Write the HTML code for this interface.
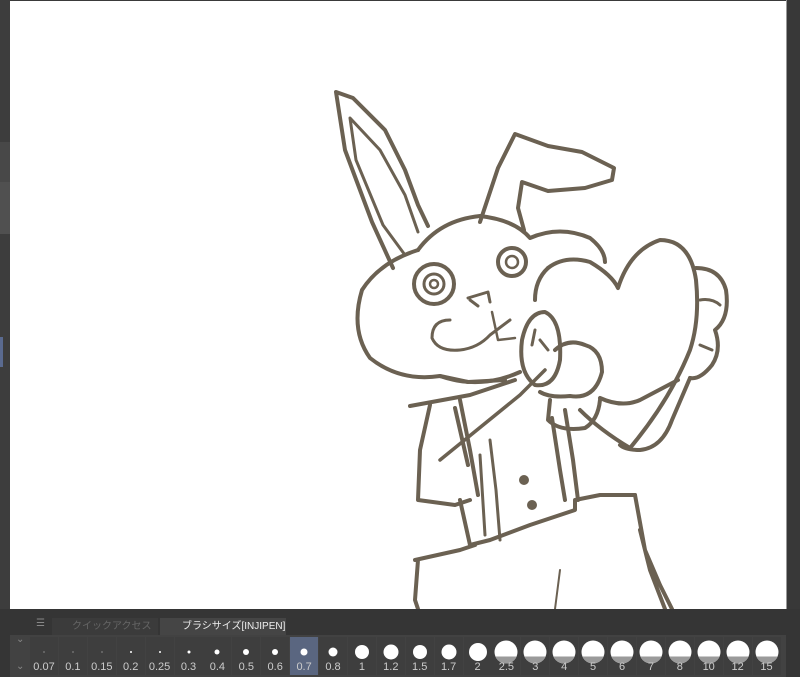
<!DOCTYPE html>
<html><head><meta charset="utf-8"><style>
html,body{margin:0;padding:0;width:800px;height:677px;overflow:hidden;background:#3a3a3a;font-family:"Liberation Sans","Noto Sans CJK JP",sans-serif}
#left{position:absolute;left:0;top:0;width:10px;height:609px;background:#3d3d3d}
#canvas{position:absolute;left:10px;top:1px;width:776px;height:608px;background:#fff}
#right{position:absolute;left:786px;top:0;width:14px;height:609px;background:#383838;border-left:1px solid #999}
#panel{position:absolute;left:0;top:609px;width:800px;height:68px;background:#353535}
.tab{position:absolute;top:9px;height:17px;font-size:10px;line-height:17px;color:#ddd;padding-left:20px}
.cell{position:absolute;top:28px;width:28px;height:38px;background:#3e3e3e}
.cell span{position:absolute;bottom:2px;left:0;width:100%;text-align:center;font-size:11px;color:#ccc}
.cell i{position:absolute;left:50%;border-radius:50%;background:#fff;transform:translate(-50%,-50%);overflow:hidden}
.cell i b{position:absolute;left:0;bottom:0;width:100%;height:30%;background:#9a9a9a}
</style></head><body>
<div id="left"><div style="position:absolute;top:142px;left:0;width:10px;height:40px;background:#484848"></div><div style="position:absolute;top:182px;left:0;width:10px;height:52px;background:#505050"></div><div style="position:absolute;top:337px;left:0;width:3px;height:30px;background:#5a6a90"></div></div>
<div id="canvas">
<svg width="776" height="608" viewBox="10 1 776 608" fill="none" stroke="#6b6152" stroke-width="4" stroke-linecap="round" stroke-linejoin="round">
<path d="M393 268 L372 222 L345 150 L336 92 L353 98 L385 130 L405 170 L418 205 L428 226"/>
<path d="M405 255 L383 225 L356 160 L350 118 L380 150 L405 195 L418 232" stroke-width="3"/>
<path d="M480 222 L498 168 L515 134 L548 146 L582 152 L614 168 L612 180 L585 188 L548 191 L522 182 L518 208 L524 230"/>
<path d="M418 250 Q380 262 362 290 Q350 330 370 358 Q400 382 440 376 Q480 390 520 372"/>
<path d="M418 250 Q440 220 480 216 Q515 220 530 238 Q560 225 590 238 Q605 250 605 262"/>
<circle cx="434" cy="284" r="20"/><circle cx="434" cy="284" r="10" stroke-width="3"/><circle cx="434" cy="284" r="4" stroke-width="2.5"/>
<circle cx="512" cy="262" r="14"/><circle cx="512" cy="262" r="6" stroke-width="2.5"/>
<path d="M468 298 L488 292 L490 302 M470 300 L478 306" stroke-width="3"/>
<path d="M450 320 Q432 320 432 338 Q438 352 460 350 Q478 348 490 335 L510 320" stroke-width="3"/>
<path d="M492 312 L498 340 L515 338" stroke-width="2.5"/>
<path d="M548 268 Q565 255 590 262 Q612 275 618 288 Q630 250 660 240 Q690 240 696 280 Q700 320 690 350 Q670 400 630 448 Q600 430 580 410"/>
<path d="M548 268 Q535 280 535 300"/>
<path d="M696 268 Q720 268 726 290 Q730 318 715 330 Q722 350 712 365 Q700 380 690 378"/>
<path d="M700 300 Q712 298 720 305 M700 345 L712 350" stroke-width="3"/>
<path d="M545 312 Q528 312 522 340 Q518 372 535 385 Q555 388 560 360 Q562 320 545 312 Z"/>
<path d="M540 392 Q550 398 570 396 Q595 400 602 372 Q602 350 585 345 Q568 338 555 350"/>
<path d="M550 400 L548 420 Q560 432 585 428 Q598 420 600 400"/>
<path d="M535 330 L532 345 M540 340 L548 350" stroke-width="3"/>
<path d="M600 398 Q622 408 640 400 L678 380 M690 378 L672 420 Q662 448 640 450 Q625 450 620 445"/>
<path d="M440 376 L468 382 L505 380 M410 406 L470 395 L515 380"/>
<path d="M430 405 L420 450 L418 500 L455 505 L470 500"/>
<path d="M460 400 L470 450 L478 495 M455 408 L468 465"/>
<path d="M440 460 L520 395 L545 370" stroke-width="3.5"/>
<path d="M460 500 L470 545 L490 540 L530 525 L575 510 L575 500 L600 495 L635 495"/>
<path d="M565 410 L573 460 L578 500 M552 418 L560 470 L565 500"/>
<path d="M490 440 L496 490 L500 540 M480 455 L485 535" stroke-width="3"/>
<circle cx="524" cy="480" r="3" fill="#6b6152"/><circle cx="532" cy="505" r="3" fill="#6b6152"/>
<path d="M415 560 L460 550 L475 545 M418 560 L415 600 L418 609"/>
<path d="M635 495 L645 550 L660 585 L672 609 M640 530 L650 570 L665 609"/>
<path d="M560 570 L555 609" stroke-width="2"/>
</svg>
</div>
<div id="right"></div>
<div id="panel">
<div style="position:absolute;left:36px;top:9px;color:#888;font-size:10px">☰</div>
<div class="tab" style="left:52px;width:86px;background:#3b3b3b;color:#666">クイックアクセス</div>
<div class="tab" style="left:160px;width:104px;background:#454545;color:#eee;padding-left:22px">ブラシサイズ[INJIPEN]</div>
<div style="position:absolute;left:10px;top:26px;width:776px;height:42px;background:#424242"></div>
<div style="position:absolute;left:16px;top:25px;color:#888;font-size:10px">⌄</div>
<div style="position:absolute;left:16px;top:52px;color:#888;font-size:10px">⌄</div>
<div id="cells"></div>
</div>
<script>
var L=["0.07","0.1","0.15","0.2","0.25","0.3","0.4","0.5","0.6","0.7","0.8","1","1.2","1.5","1.7","2","2.5","3","4","5","6","7","8","10","12","15"];
var S=[1,1,1,2,2,3,5,6,6,7,9,14,15,14,15,18,23,23,23,23,23,23,23,23,23,23];
var h="";for(var i=0;i<L.length;i++){var x=30+i*28.9;h+='<div class="cell" style="left:'+x+'px;'+(i==9?'background:#5a6680':'')+'"><i style="top:15px;width:'+S[i]+'px;height:'+S[i]+'px">'+(i>=16?'<b></b>':'')+'</i><span>'+L[i]+'</span></div>';}
document.getElementById("cells").innerHTML=h;
</script>
</body></html>
